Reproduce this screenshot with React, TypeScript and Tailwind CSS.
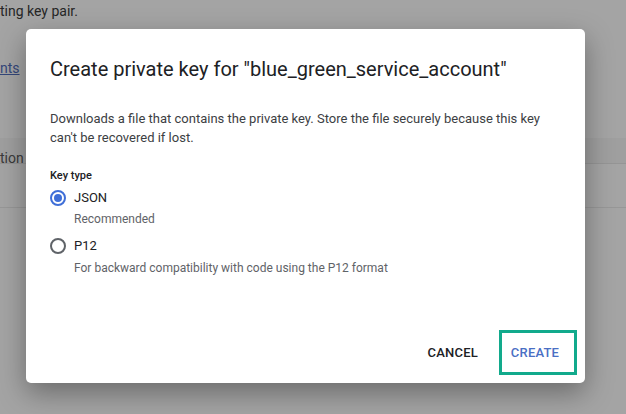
import React from "react";

const font = { fontFamily: "Roboto, 'Noto Sans', Arial, sans-serif" };

function Radio({ checked }: { checked?: boolean }) {
  return (
    <span className={`grid size-[16px] shrink-0 place-items-center rounded-full border-2 ${checked ? "border-[#3f6fd8]" : "border-[#5f6368]"}`}>
      {checked && <span className="size-[8px] rounded-full bg-[#3f6fd8]" />}
    </span>
  );
}

export default function App() {
  return (
    <div style={font} className="relative h-[414px] w-[626px] overflow-hidden bg-[#a4a4a4] text-[#202124]">
      <div className="flex flex-col">
        <p className="mt-[1px] h-[20px] text-[14px] leading-[20px] text-[#262626]">ting key pair.</p>
        <p className="mt-[37px] h-[20px] text-[14px] leading-[20px] text-[#34477a] underline">nts</p>
        <div className="mt-[60px] h-[26px] border-b border-[#959595] bg-[#9f9f9f]" />
        <p className="-mt-[16px] h-[20px] text-[14px] leading-[20px] text-[#3a3a3a]">tion d</p>
        <div className="mt-[10px] h-[30px] border-b border-[#979797]" />
      </div>

      <div className="absolute left-[26px] top-[29px] flex h-[354px] w-[559px] flex-col rounded-[5px] bg-white shadow-[0_10px_28px_rgba(0,0,0,0.35)]">
        <div className="flex flex-1 flex-col px-6">
          <h1 className="mt-[26px] text-[20px] leading-[28px] text-[#202124]">Create private key for "blue_green_service_account"</h1>
          <p className="mt-[26px] text-[13px] leading-[19px] text-[#3c4043]">
            Downloads a file that contains the private key. Store the file securely because this key can't be recovered if lost.
          </p>
          <p className="mt-[21px] text-[11px] font-medium leading-[16px] text-[#202124]">Key type</p>
          <label className="mt-[5px] flex items-center gap-[8px]">
            <Radio checked />
            <span className="text-[13px] leading-[18px] text-[#202124]">JSON</span>
          </label>
          <p className="ml-[24px] mt-[4px] text-[12px] leading-[16px] text-[#5f6368]">Recommended</p>
          <label className="mt-[10px] flex items-center gap-[8px]">
            <Radio />
            <span className="text-[13px] leading-[18px] text-[#202124]">P12</span>
          </label>
          <p className="ml-[24px] mt-[5px] text-[12px] leading-[16px] text-[#5f6368]">For backward compatibility with code using the P12 format</p>
        </div>
        <div className="mb-[8px] mr-[8px] flex items-center justify-end gap-[21px]">
          <button className="text-[13px] font-medium tracking-[0.2px] text-[#202124]">CANCEL</button>
          <button className="flex h-[45px] w-[78px] items-center justify-center border-[3px] border-[#12aa8c] pr-[6px] text-[13px] font-medium tracking-[0.2px] text-[#4a6fc4]">CREATE</button>
        </div>
      </div>
    </div>
  );
}
